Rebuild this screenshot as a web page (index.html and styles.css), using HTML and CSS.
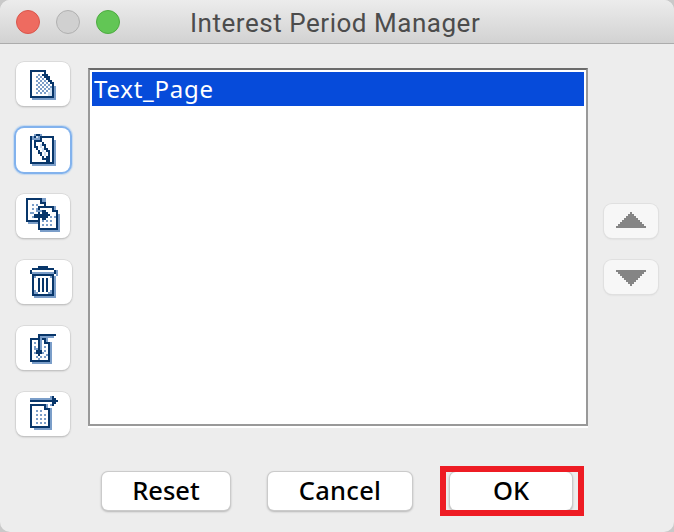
FILE: index.html
```html
<!DOCTYPE html>
<html lang="en">
<head>
<meta charset="utf-8">
<title>Interest Period Manager</title>
<link rel="stylesheet" href="styles.css">
</head>
<body>
<div class="window">
  <header class="titlebar">
    <div class="lights"><span class="light close"></span><span class="light minimize"></span><span class="light expand"></span></div>
    <h1 class="title">Interest Period Manager</h1>
  </header>
  <main class="content">
    <nav class="tools">
      <button class="tool" aria-label="New">
        <svg width="26" height="30" viewBox="0 0 13 15">
          <defs><pattern id="dither" width="2" height="2" patternUnits="userSpaceOnUse"><path class="fill-light" d="M0 0h1v1H0zM1 1h1v1H1z"/></pattern></defs>
          <path class="light-line" d="M12.500 8v7M1 14.500h12"/>
          <path class="paper" d="M0 0h8v2h1v1h1v2h1v1h1v8H0z"/>
          <path fill="url(#dither)" d="M4 2h4v2h1v2h2v6H3V3h1z"/>
          <path class="pale" d="M9 11h2v2H9zM10 9h1v2h-1z"/>
          <path class="ink-line" d="M0 .5h8M.5 0v14M0 13.500h12M11.500 6v8M7.500 1v1M6 2.500h3M7 3.500h3M8 4.500h1M9.500 3v2M9 5.500h2M10 6.500h2"/>
        </svg>
      </button>
      <button class="tool focused" aria-label="Edit">
        <svg width="26" height="32" viewBox="0 0 13 16">
          <path class="light-line" d="M12.500 3v13M1 15.500h12"/>
          <path class="paper" d="M0 1h12v14H0z"/>
          <path class="ink-line" d="M0 1.500h12M.5 1v14M0 14.500h12M11.500 1v14"/>
          <path class="fill-light" d="M2 0h4v3H5v1H2V3H1V1h1z"/>
          <path class="ink-line" d="M3 .5h2M5.500 1v2M2.500 1v1M2.500 3v4M3.500 6v2M4.500 8v2M5.500 9v2M6.500 11v2M7 12.500h3M8 13.500h2M3 3.500h3M6.500 4v2M7.500 5v3M8.500 7v2M9.500 8v5M8.500 11v2"/>
          <path class="pale" d="M3 1h1v1H3zM5 5h1v2H5zM6 7h1v2H6zM7 9h1v2H7z"/>
        </svg>
      </button>
      <button class="tool copy" aria-label="Copy">
        <svg width="34" height="34" viewBox="0 0 17 17">
          <path class="fill-light" d="M8 0h2v2H8zM1 12h5v1H1z"/>
          <path class="paper" d="M0 0h8v2h2v10H0z"/>
          <path class="ink-line" d="M0 .5h8M.5 0v12M0 11.500h6M7.500 0v3M7 2.500h3M9.500 2v3"/>
          <path class="light-line" d="M3 3.500h1M5 3.500h1M3 5.500h1M5 5.500h1M2 7.500h2M3 9.500h2M8.500 1v1"/>
          <path class="light-line" d="M16.500 8v9M7 16.500h10"/>
          <path class="paper" d="M6 4h8v2h2v10H6z"/>
          <path class="ink-line" d="M6 4.500h8M6.500 4v12M6 15.500h10M15.500 6v10M13.500 4v3M13 6.500h3"/>
          <path class="light-line" d="M14.500 4v2M12 9.500h1M14 9.500h1M8 11.500h1M10 11.500h1M12 11.500h1M8 13.500h1M10 13.500h1M12 13.500h1M5 6.500h3"/>
          <path class="fill-ink" d="M4 8h4V6h2v1h1v1h1v1h-1v1h-1v1H8v-1H4z"/>
        </svg>
      </button>
      <button class="tool wide" aria-label="Delete">
        <svg width="28" height="32" viewBox="0 0 14 16">
          <path class="light-line" d="M12.500 5v11M2 15.500h11M13.500 2v3"/>
          <path class="paper" d="M0 2h13v3h-1v10H1V5H0z"/>
          <path class="ink-line" d="M4 .5h5M4.500 0v2M8.500 0v2M1 1.500h11M.5 2v2M12.500 2v2M1 4.500h11M1.500 4v11M11.500 4v11M1 14.500h11M4.500 6v7M6.500 6v7M8.500 6v7"/>
          <path class="light-line" d="M1 3.500h11M2.500 5v1M10.500 5v1M2.500 12v2M10.500 12v2M2 13.500h2M9 13.500h2"/>
        </svg>
      </button>
      <button class="tool" aria-label="Import">
        <svg width="26" height="30" viewBox="0 0 13 15">
          <path class="light-line" d="M10.500 4v11M1 14.500h10M5 1.500h7"/>
          <path class="paper" d="M0 2h8v2h2v10H0z"/>
          <path class="light-line" d="M5 1.500h6M5.500 1v7M8.500 2v2M2 4.500h1M2 6.500h1M7 6.500h1M2 7.500h2M7 8.500h1M2 9.500h1M6 9.500h1M3 11.500h1M5 11.500h1M7 11.500h1M4 12.500h1M8 10.500h1"/>
          <path class="ink-line" d="M0 2.500h4M.5 2v12M0 13.500h10M9.500 4v10M7.500 2v3M6 2.500h2M7 4.500h3M4 .5h9M4.500 0v11M3 8.500h3M3 9.500h3"/>
        </svg>
      </button>
      <button class="tool export" aria-label="Export">
        <svg width="28" height="34" viewBox="0 0 14 17">
          <path class="light-line" d="M10.500 6v11M2 16.500h9M0 1.500h11M10.500 0v1M10 4.500h2M12 3.500h1"/>
          <path class="paper" d="M0 4h8v2h2v10H0z"/>
          <path class="ink-line" d="M0 2.500h14M11.500 0v5M12.500 1v3M0 4.500h8M.5 4v12M0 15.500h10M9.500 6v10M7.500 4v3M7 6.500h3"/>
          <path class="light-line" d="M8.500 4v2M3 7.500h1M5 7.500h1M3 9.500h1M5 9.500h1M7 9.500h1M3 11.500h1M5 11.500h1M7 11.500h1M3 13.500h1M5 13.500h1M7 13.500h1"/>
        </svg>
      </button>
    </nav>
    <div class="list"><div class="row"><span class="row-text">Text_Page</span></div></div>
    <div class="order">
      <button class="move" aria-label="Move up"><svg width="30" height="16" viewBox="0 0 15 8"><path class="arrow" d="M7 0h1v1h1v1h1v1h1v1h1v1h1v1h1v1h1v1H0V7h1V6h1V5h1V4h1V3h1V2h1V1h1z"/></svg></button>
      <button class="move down" aria-label="Move down"><svg width="30" height="16" viewBox="0 0 15 8"><path class="arrow" d="M0 0h15v1h-1v1h-1v1h-1v1h-1v1h-1v1H9v1H8v1H7V7H6V6H5V5H4V4H3V3H2V2H1V1H0z"/></svg></button>
    </div>
  </main>
  <footer class="actions">
    <button class="action reset">Reset</button>
    <button class="action cancel">Cancel</button>
    <div class="highlight"><button class="action ok">OK</button></div>
  </footer>
</div>
</body>
</html>
```
FILE: styles.css
```css
* { box-sizing: border-box; }
body { margin: 0; background: #c9c9c9; }
button { border: 0; padding: 0; color: #000; font: inherit; }
.window {
  width: 674px;
  height: 532px;
  overflow: hidden;
  background: #ededed;
  border-radius: 10px;
  font-family: "Noto Sans", "Open Sans", sans-serif;
}
.titlebar {
  display: grid;
  grid-template-columns: 190px 1fr;
  height: 44px;
  background: linear-gradient(#ececec, #d2d2d2);
  border-bottom: 1px solid #acacac;
}
.lights { display: flex; gap: 16px; padding: 10px 0 0 16px; }
.light { width: 24px; height: 24px; border-radius: 50%; border: 1px solid; }
.close { background: #ee6b60; border-color: #d9564c; }
.minimize { background: #d0d0d0; border-color: #b0b0b0; }
.expand { background: #62c655; border-color: #4dab40; }
.title {
  margin: 0;
  color: #4c4c4c;
  font: 400 26px/46px Roboto, sans-serif;
  letter-spacing: 0.53px;
  white-space: nowrap;
}
.content {
  display: grid;
  grid-template-columns: 72px 500px 55px;
  column-gap: 16px;
  height: 392px;
}
.tools { display: flex; flex-direction: column; gap: 22px; padding: 18px 0 0 16px; }
.tool {
  display: flex;
  flex: none;
  width: 54px;
  height: 44px;
  padding: 8px 0 0 14px;
  border-radius: 8px;
  background: #fff;
  box-shadow: 0 0 0 0.5px #cecece, 0 1px 2px #adadad;
}
.tool.wide { width: 56px; padding-top: 6px; }
.tool.focused { padding-top: 6px; box-shadow: 0 0 0 2px #82b2ed, 0 0 1px 3px #c5d9ef; }
.tool.copy { padding: 4px 0 0 10px; }
.tool.export { padding-top: 4px; }
svg { display: block; flex: none; }
.paper { fill: #fff; }
.pale { fill: #cfdff0; }
.fill-light { fill: #7b9ec9; }
.fill-ink { fill: #08366a; }
.ink-line { stroke: #08366a; stroke-width: 1; fill: none; }
.light-line { stroke: #7b9ec9; stroke-width: 1; fill: none; }
.list {
  height: 358px;
  margin-top: 24px;
  padding: 2px;
  background: #fff;
  border: 2px solid #999;
  border-top-color: #6b6b6b;
  box-shadow: 0 2px #fff;
}
.row { height: 34px; padding-left: 2px; background: #064bda; color: #fff; font-size: 24px; line-height: 33px; }
.row-text { letter-spacing: 0.75px; }
.order { display: flex; flex-direction: column; gap: 22px; padding-top: 160px; }
.move {
  display: flex;
  width: 54px;
  height: 34px;
  padding: 8px 0 0 12px;
  border-radius: 8px;
  background: #f7f7f7;
  box-shadow: 0 0 0 1px #e0e0e0, 0 1px 2px #cfcfcf;
}
.move.down { padding-top: 10px; }
.arrow { fill: #858585; }
.actions { display: flex; align-items: flex-start; padding: 36px 0 0 102px; }
.action {
  height: 38px;
  padding-bottom: 2px;
  border-radius: 6px;
  background: #fff;
  box-shadow: 0 0 0 1px #cbcbcb, 0 1px 2px 1px #b8b8b8;
  font-size: 25.5px;
  font-weight: 500;
  line-height: 36px;
}
.reset { width: 128px; }
.cancel { width: 144px; margin-left: 38px; letter-spacing: 0.3px; }
.highlight { width: 144px; height: 50px; margin: -6px 0 0 28px; padding-left: 4px; border: 6px solid #ee1c24; overflow: hidden; }
.ok { display: block; width: 122px; }
```
